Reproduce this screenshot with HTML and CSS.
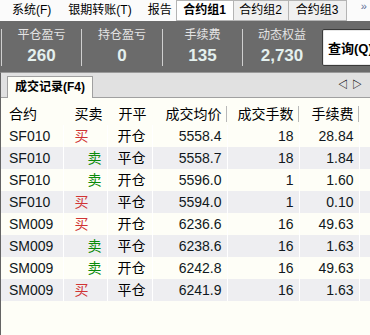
FILE: index.html
```html
<!DOCTYPE html>
<html>
<head>
<meta charset="utf-8">
<link rel="stylesheet" href="styles.css">
</head>
<body>
<div class="app">
  <div class="menubar">
    <span class="menu-item m1">系统(F)</span>
    <span class="menu-item m2">银期转账(T)</span>
    <span class="menu-item m3">报告</span>
    <span class="tab active t1">合约组1</span>
    <span class="tab t2">合约组2</span>
    <span class="tab t3">合约组3</span>
    <span class="more">»</span>
  </div>
  <div class="stats">
    <div class="stat s1"><span class="label">平仓盈亏</span><span class="value">260</span></div>
    <div class="stat s2"><span class="label">持仓盈亏</span><span class="value">0</span></div>
    <div class="stat s3"><span class="label">手续费</span><span class="value">135</span></div>
    <div class="stat s4 last"><span class="label">动态权益</span><span class="value">2,730</span></div>
    <button class="query">查询(Q)</button>
  </div>
  <div class="panel">
    <div class="tabstrip">
      <span class="ptab">成交记录(F4)</span>
      <span class="arrows"><span class="arr">◁</span><span class="arr">▷</span></span>
    </div>
    <table class="grid">
      <colgroup>
        <col class="c1"><col class="c2"><col class="c3"><col class="c4"><col class="c5"><col class="c6"><col class="c7">
      </colgroup>
      <thead>
        <tr>
          <th class="l"><span>合约</span></th>
          <th class="l bs"><span>买卖</span></th>
          <th class="l kp"><span>开平</span></th>
          <th class="r"><span>成交均价</span></th>
          <th class="r"><span>成交手数</span></th>
          <th class="r"><span>手续费</span></th>
          <th class="e"></th>
        </tr>
      </thead>
      <tbody>
        <tr><td class="code">SF010</td><td class="buy">买</td><td class="oc">开仓</td><td class="num">5558.4</td><td class="num">18</td><td class="num">28.84</td><td></td></tr>
        <tr class="alt"><td class="code">SF010</td><td class="sell">卖</td><td class="oc">平仓</td><td class="num">5558.7</td><td class="num">18</td><td class="num">1.84</td><td></td></tr>
        <tr><td class="code">SF010</td><td class="sell">卖</td><td class="oc">开仓</td><td class="num">5596.0</td><td class="num">1</td><td class="num">1.60</td><td></td></tr>
        <tr class="alt"><td class="code">SF010</td><td class="buy">买</td><td class="oc">平仓</td><td class="num">5594.0</td><td class="num">1</td><td class="num">0.10</td><td></td></tr>
        <tr><td class="code">SM009</td><td class="buy">买</td><td class="oc">开仓</td><td class="num">6236.6</td><td class="num">16</td><td class="num">49.63</td><td></td></tr>
        <tr class="alt"><td class="code">SM009</td><td class="sell">卖</td><td class="oc">平仓</td><td class="num">6238.6</td><td class="num">16</td><td class="num">1.63</td><td></td></tr>
        <tr><td class="code">SM009</td><td class="sell">卖</td><td class="oc">开仓</td><td class="num">6242.8</td><td class="num">16</td><td class="num">49.63</td><td></td></tr>
        <tr class="alt"><td class="code">SM009</td><td class="buy">买</td><td class="oc">平仓</td><td class="num">6241.9</td><td class="num">16</td><td class="num">1.63</td><td></td></tr>
      </tbody>
    </table>
  </div>
</div>
</body>
</html>
```
FILE: styles.css
```css
html, body {
  margin: 0;
  padding: 0;
}
body {
  width: 370px;
  height: 335px;
  overflow: hidden;
  background: #fefef7;
  font-family: "Liberation Sans", "Noto Sans CJK SC", sans-serif;
  color: #000;
}
.app {
  width: 370px;
  height: 335px;
  display: flex;
  flex-direction: column;
}

/* menu bar */
.menubar {
  height: 21px;
  flex-shrink: 0;
  display: flex;
  align-items: stretch;
  background: #fbfbfb;
  font-size: 12px;
  line-height: 21px;
  white-space: nowrap;
}
.menu-item { display: block; }
.m1 { margin-left: 12px; }
.m2 { margin-left: 17px; }
.m3 { margin-left: 16px; margin-right: 4px; }
.tab {
  display: block;
  box-sizing: border-box;
  text-align: center;
  background: #f0f0f0;
  border: 1px solid #b4b4b4;
  border-left: none;
  line-height: 19px;
}
.tab.active {
  background: #ffffff;
  font-weight: bold;
  border-left: 1px solid #b4b4b4;
}
.t1 { width: 58px; }
.t2 { width: 55px; }
.t3 { width: 58px; }
.more {
  display: block;
  margin-left: 14px;
  color: #5a6e96;
  font-size: 11px;
  line-height: 12px;
}

/* stats */
.stats {
  height: 51px;
  flex-shrink: 0;
  display: flex;
  align-items: center;
  background: #6b6b6b;
  padding-left: 1px;
}
.stat {
  flex-shrink: 0;
  height: 37px;
  box-sizing: border-box;
  border-left: 1px solid #cfcfcf;
  display: flex;
  flex-direction: column;
  align-items: center;
  margin-top: 2px;
}
.s1 { width: 80px; }
.s2 { width: 81px; }
.s3 { width: 80px; }
.s4 { width: 79px; }
.label {
  font-size: 12px;
  line-height: 12px;
  color: #e4e4e4;
}
.value {
  font-size: 17px;
  font-weight: bold;
  line-height: 20px;
  color: #e4f0ee;
  margin-top: 5px;
}
.query {
  flex-shrink: 0;
  width: 60px;
  height: 37px;
  margin-left: 1px;
  margin-top: 2px;
  padding: 0 0 0 5px;
  text-align: left;
  background: #ffffff;
  border: 1px solid #3a3a3a;
  border-radius: 2px;
  box-shadow: inset 0 0 0 1px #e8e8e8;
  font-family: "Liberation Sans", "Noto Sans CJK SC", sans-serif;
  font-size: 13px;
  font-weight: bold;
  color: #000;
  white-space: nowrap;
}

/* panel */
.panel {
  flex: 1;
  display: flex;
  flex-direction: column;
  border-top: 1px solid #9a9a9a;
  border-left: 1px solid #646464;
}
.tabstrip {
  height: 25px;
  flex-shrink: 0;
  box-sizing: border-box;
  background: #e1e1e1;
  border-bottom: 1px solid #a0a0a0;
  display: flex;
  align-items: flex-end;
  padding-left: 6px;
}
.ptab {
  display: block;
  width: 86px;
  height: 22px;
  box-sizing: border-box;
  margin-bottom: -1px;
  background: #fefef7;
  border: 1px solid #a0a0a0;
  border-bottom: none;
  font-size: 12px;
  font-weight: bold;
  line-height: 20px;
  text-align: center;
}
.arrows {
  margin-left: auto;
  margin-right: 8px;
  align-self: center;
  display: flex;
  gap: 4px;
  font-size: 10px;
  line-height: 12px;
  color: #000;
  font-weight: bold;
}

/* grid */
.grid {
  border-collapse: collapse;
  table-layout: fixed;
  width: 369px;
  font-size: 14px;
}
.c1 { width: 62px; }
.c2 { width: 44px; }
.c3 { width: 45px; }
.c4 { width: 75px; }
.c5 { width: 72px; }
.c6 { width: 60px; }
.c7 { width: 11px; }
.grid th {
  height: 24px;
  padding: 0;
  font-weight: normal;
  white-space: nowrap;
  border-right: 1px solid #fefef7;
  background: #fefef7;
  line-height: 16px;
  vertical-align: bottom;
  padding-bottom: 3px;
}
.grid th span {
  display: block;
  border-right: 1px solid #b8b8b8;
  height: 16px;
}
.grid th.l { text-align: left; padding-left: 8px; }
.grid th.l span { margin-right: -1px; }
.grid th.bs, .grid th.kp { padding-left: 11px; }
.grid th.r { text-align: right; }
.grid th.r span { padding-right: 4px; }
.grid td {
  height: 22px;
  padding: 0;
  line-height: 22px;
  white-space: nowrap;
  border-right: 1px solid #ffffff;
}
.grid tr.alt td { background: #eeeef1; }
.code { padding-left: 8px !important; color: #101820; }
.buy { color: #d03434; padding-left: 11px !important; }
.sell { color: #0a8a0a; text-align: right; padding-right: 5px !important; }
.oc { padding-left: 10px !important; }
.num { text-align: right; padding-right: 5px !important; color: #101820; }
```
